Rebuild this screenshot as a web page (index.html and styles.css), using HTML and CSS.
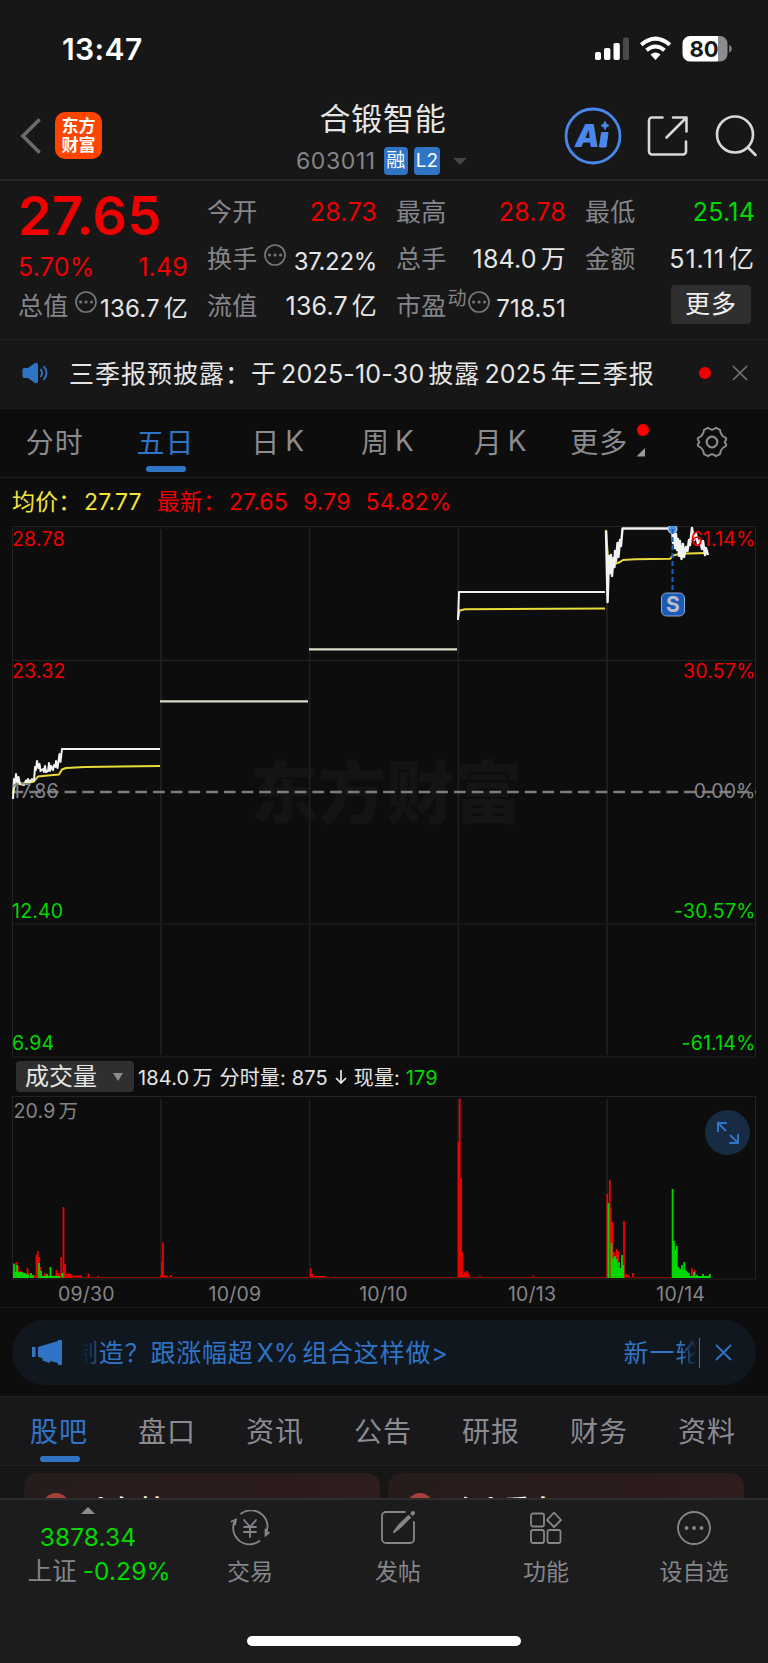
FILE: index.html
```html
<!DOCTYPE html>
<html lang="zh-CN">
<head>
    <meta charset="UTF-8">
    <meta name="viewport" content="width=device-width, initial-scale=1.0">
    <title>合锻智能 603011</title>
    <link rel="stylesheet" href="styles.css">
</head>
<body>
    <!-- Status Bar -->
    <div class="status-bar">
        <div class="clock">13:47</div>
        <svg class="status-icons" width="138" height="28" viewBox="594 35 138 28">
            <g fill="#fff">
                <rect x="595" y="52" width="6" height="8" rx="1.8"/>
                <rect x="604" y="48" width="6.4" height="12" rx="1.8"/>
                <rect x="613.5" y="43" width="6.3" height="17" rx="1.8"/>
                <rect x="623" y="37.5" width="6" height="22.5" rx="1.8" fill="#4a4a4a"/>
            </g>
            <g fill="none" stroke="#fff" stroke-width="4">
                <path d="M641.3 44.7Q655.5 32.5 669.8 44.7"/>
                <path d="M646.5 50.2Q655.5 42.8 664.5 50.2"/>
            </g>
            <path d="M650.5 54.5Q655.5 50.5 660.5 54.5L655.5 60Z" fill="#fff"/>
            <path d="M718 36H720a7.5 7.5 0 0 1 7.5 7.5V54a7.5 7.5 0 0 1-7.5 7.5H718Z" fill="#8c8c8c"/>
            <path d="M718 36H690a7.5 7.5 0 0 0-7.5 7.5V54a7.5 7.5 0 0 0 7.5 7.5H718Z" fill="#fff"/>
            <path d="M729 45Q732 46 732 48.7Q732 51.5 729 52.5Z" fill="#777"/>
            <text x="704" y="56.5" class="battery-text">80</text>
        </svg>
    </div>

    <!-- Nav -->
    <div class="nav">
        <div class="nav-left">
            <svg width="22" height="36" viewBox="0 0 22 36"><path d="M19.5 2.5L4 18L19.5 33.5" fill="none" stroke="#6a6a6a" stroke-width="3.8" stroke-linecap="round"/></svg>
            <div class="logo">东方<br>财富</div>
        </div>
        <div class="nav-title">
            <h1>合锻智能</h1>
            <div class="nav-code">
                <span>603011</span>
                <b class="tag">融</b>
                <b class="tag tag-l2">L2</b>
                <i class="caret"></i>
            </div>
        </div>
        <div class="nav-right">
            <svg width="58" height="58" viewBox="0 0 58 58">
                <circle cx="29" cy="29" r="27" fill="none" stroke="#4a87ec" stroke-width="2.8"/>
                <text x="11" y="39.5" class="ai-text">A</text>
                <path d="M37.5 25.5h6.5l-2 14.5h-6.5z" fill="#4a87ec" stroke="#4a87ec" stroke-linejoin="round"/>
                <path d="M41 14.5l1.3 2.7 2.7 1.3-2.7 1.3-1.3 2.7-1.3-2.7-2.7-1.3 2.7-1.3z" fill="#4a87ec" stroke="#4a87ec"/>
            </svg>
            <svg width="42" height="42" viewBox="0 0 42 42" fill="none" stroke="#d8d8d8" stroke-width="2.6" stroke-linecap="round" stroke-linejoin="round">
                <path d="M15.5 2.5H5a3 3 0 0 0-3 3V36.5a3 3 0 0 0 3 3H36a3 3 0 0 0 3-3V26.5M26 2.5H39.5V16.5M39 3L19.5 22.5"/>
            </svg>
            <svg width="42" height="42" viewBox="0 0 42 42" fill="none" stroke="#d8d8d8" stroke-width="2.6" stroke-linecap="round">
                <circle cx="20" cy="19.5" r="18"/><path d="M33 32.5L40.5 40"/>
            </svg>
        </div>
    </div>

    <!-- Quote -->
    <div class="quote">
        <div class="quote-col main-col">
            <div class="price red">27.65</div>
            <div class="cell change red"><span>5.70%</span><span>1.49</span></div>
            <div class="cell"><span class="label">总值</span><i class="more-dot"><svg viewBox="0 0 22 22"><circle cx="11" cy="11" r="10"/><path d="M5.5 11h.1M11 11h.1M16.5 11h.1"/></svg></i><span class="small">136.7<em>亿</em></span></div>
        </div>
        <div class="quote-col">
            <div class="cell"><span class="label">今开</span><span class="red">28.73</span></div>
            <div class="cell"><span class="label">换手</span><i class="more-dot"><svg viewBox="0 0 22 22"><circle cx="11" cy="11" r="10"/><path d="M5.5 11h.1M11 11h.1M16.5 11h.1"/></svg></i><span class="small turnover">37.22%</span></div>
            <div class="cell"><span class="label">流值</span><span>136.7<em>亿</em></span></div>
        </div>
        <div class="quote-col">
            <div class="cell"><span class="label">最高</span><span class="red">28.78</span></div>
            <div class="cell"><span class="label">总手</span><span>184.0<em>万</em></span></div>
            <div class="cell"><span class="label">市盈<sup>动</sup></span><i class="more-dot dot-tight"><svg viewBox="0 0 22 22"><circle cx="11" cy="11" r="10"/><path d="M5.5 11h.1M11 11h.1M16.5 11h.1"/></svg></i><span class="small">718.51</span></div>
        </div>
        <div class="quote-col">
            <div class="cell"><span class="label">最低</span><span class="green">25.14</span></div>
            <div class="cell"><span class="label">金额</span><span class="amount">51.11<em>亿</em></span></div>
            <button class="more-button">更多</button>
        </div>
    </div>

    <!-- Notice -->
    <div class="notice">
        <svg width="28" height="24" viewBox="0 0 28 24">
            <path d="M2 7H6L13 2Q16 1 16 4V20Q16 23 13 22L6 17H2Q.5 17 .5 15V9Q.5 7 2 7Z" fill="#2f74c5"/>
            <path d="M18.5 8Q21.5 12 18.5 16M21.5 5Q27.5 12 21.5 19" fill="none" stroke="#2f74c5" stroke-width="1.9"/>
        </svg>
        <div class="notice-text"><span>三季报预披露：于</span><span class="num">2025-10-30</span><span>披露</span><span class="num">2025</span><span>年三季报</span></div>
        <i class="red-dot"></i>
        <svg class="notice-close" width="16" height="16" viewBox="0 0 16 16"><path d="M1 1L15 15M15 1L1 15" stroke="#777" stroke-width="1.5"/></svg>
    </div>

    <!-- Period Tabs -->
    <div class="period-tabs">
        <div class="period">分时</div>
        <div class="period active">五日</div>
        <div class="period period-k">日<span>K</span></div>
        <div class="period period-k">周<span>K</span></div>
        <div class="period period-k">月<span>K</span></div>
        <div class="period period-more">更多
            <svg width="14" height="36" viewBox="0 0 14 36"><circle cx="7" cy="7" r="6" fill="#f00"/><path d="M9 25V33.5H.5Z" fill="#98989d"/></svg>
        </div>
        <div class="period period-set">
            <svg width="32" height="32" viewBox="0 0 32 32" fill="none" stroke="#8b8b90" stroke-width="1.9" stroke-linejoin="round">
                <path d="M12 1.8Q16 5.5 20 1.8L24 3.8Q24.5 9 29 11.5Q31 12 29.8 14.5Q27.5 16 29.8 17.5Q31 20 29 20.5Q24.5 23 24 28.2L20 30.2Q16 26.5 12 30.2L8 28.2Q7.5 23 3 20.5Q1 20 2.2 17.5Q4.5 16 2.2 14.5Q1 12 3 11.5Q7.5 9 8 3.8Z"/>
                <circle cx="16" cy="16" r="5.3" stroke-width="2.2"/>
            </svg>
        </div>
    </div>

    <!-- Price Chart -->
    <div class="legend">
        <span class="yellow name">均价：</span><span class="yellow">27.77</span>
        <span class="red name">最新：</span><span class="red">27.65</span><span class="red">9.79</span><span class="red">54.82%</span>
    </div>
    <svg class="price-chart" width="744" height="532" viewBox="12 526 744 532">
        <text x="250" y="818" class="watermark">东方财富</text>
        <g class="grid">
            <rect x="12.5" y="526.5" width="743" height="530.5"/>
            <path d="M12 660.5H756M12 924H756"/>
            <path class="grid-v" d="M161 529V1055M309.7 529V1055M458.3 529V1055M607 529V1055"/>
        </g>
        <path d="M12 792H756" stroke="#7d7d80" stroke-width="2.4" stroke-dasharray="11.7 6" stroke-dashoffset="0.5"/>
        <g class="line-avg">
            <path d="M13 794L15 784L28 783L34 781.5L38 776.5L48 775.5L59 774.5L62 769.5L66 768L85 767L120 766.5L160 766"/>
            <path d="M458 618L459.5 610.5L465 609.3L605 608.5"/>
            <path d="M606 530L608 558L610 564.5L616 563.5L620 562L623 560L635 559.3L670 558.8L673 555.5L680 553.8L706 553"/>
        </g>
        <g class="line-price">
            <path d="M13 799L14 779L14.8 786L16 774L17.5 783L18.5 777L20 784L24 785L26 780.5L27 784L28 779L30 782L32 779L34 781L35 767L36 770L37 761L38.5 768L39.5 764L40.5 771L43 769L44 772L45 766L46 772L48 771L49 763L50 771L51 766L53 770L54 765L55.5 767L56 761L57.5 768L59.5 754L60.5 762L62 749H160"/>
            <path d="M458 620L459 592H605"/>
            <path class="active-day" d="M606 531L607.6 602L609 556L610 573L611 555L612 576L613.5 558L614.5 567L615 551L616 561L617.5 543L618.5 557L620 540L621 546L622.5 528.5H672L673 543L674 533L675 548L676 534L677 550L678 539L679 556L680 541L681.5 559L683 544L684 557L686 547L687.5 551L689 540L690 545L692 528L694 540L696 534L698 544L700 540L702 549L703 541L705 555L706 548L708 555"/>
            <path class="flat" d="M160 701.3H308M309 649.3H457"/>
        </g>
        <circle cx="672.5" cy="529" r="4.5" fill="#4c8fe8" stroke="#cfe2ff"/>
        <path d="M672.5 529V593" stroke="#1d5fbd" stroke-width="2" stroke-dasharray="5 3"/>
        <rect x="661.5" y="593" width="23" height="23" rx="5" fill="#1b5cb8" stroke="#8fa8cc"/>
        <text x="673" y="612" class="mark-text">S</text>
        <g class="axis">
            <text x="12" y="545.5" class="up">28.78</text>
            <text x="12" y="678" class="up">23.32</text>
            <text x="12" y="798">17.86</text>
            <text x="12" y="917.5" class="down">12.40</text>
            <text x="12" y="1050" class="down">6.94</text>
        </g>
        <g class="axis axis-right">
            <text x="755.5" y="545.5" class="up">61.14%</text>
            <text x="755.5" y="678" class="up">30.57%</text>
            <text x="755.5" y="798">0.00%</text>
            <text x="755.5" y="917.5" class="down">-30.57%</text>
            <text x="755.5" y="1050" class="down">-61.14%</text>
        </g>
    </svg>

    <!-- Volume Chart -->
    <div class="volume-head">
        <div class="select">成交量<i></i></div>
        <span>184.0<em>万</em></span><span>分时量: 875</span>
        <svg width="12" height="16" viewBox="0 0 12 16"><path d="M6 1V14M1 9L6 14L11 9" fill="none" stroke="#e6e6e6" stroke-width="1.7"/></svg>
        <span>现量: <b class="green">179</b></span>
    </div>
    <div class="volume-box">
        <svg width="744" height="184" viewBox="12 1096 744 184">
            <g class="grid">
                <rect x="12.5" y="1096.5" width="743" height="182.5"/>
                <path class="grid-v" d="M161 1099V1278M309.7 1099V1278M458.3 1099V1278M607 1099V1278"/>
            </g>
            <path class="bar-up" d="M16.5 1278V1262M18 1278V1266M20 1278V1271M27.5 1278V1268M29 1278V1273M36.5 1278V1255M37.8 1278V1251M39 1278V1257M40.5 1278V1267M45 1278V1273M56.5 1278V1270M58 1278V1273M61.2 1278V1257M63.5 1278V1207M65 1278V1264M66.5 1278V1274M68.5 1278V1273M70.5 1278V1274M88.5 1278V1273.5M98 1278V1276M162 1278V1262M163 1278V1242.5M165 1278V1276M170.8 1278V1275M310.8 1278V1268.5M312.3 1278V1274M458.5 1278V1142M459.7 1278V1098.5M461 1278V1178M462 1278V1252M463.5 1278V1274M465 1278V1272M467 1278V1271M468 1278V1273M480 1278V1276M533.5 1278V1275.5M607.3 1278V1194M609.8 1278V1180M610.8 1278V1208M612.5 1278V1222M614 1278V1252M616.5 1278V1249M618 1278V1251M624 1278V1221M626 1278V1274M633 1278V1273M691.8 1278V1268M695 1278V1270"/>
            <path class="bar-up" d="M20 1276.5H82M160 1276.5H168M310 1277H325M458 1276.5H470M620 1276.5H630" stroke-width="2"/>
            <path d="M80 1277.5H606M625 1277.5H671" stroke="#940303" stroke-width="1"/>
            <path class="bar-down" d="M14 1278V1263.5M17 1278V1265M19 1278V1272M21 1278V1274M23 1278V1273M25 1278V1274M31 1278V1273M33 1278V1275M39 1278V1263M41 1278V1271M47 1278V1274M50.5 1278V1267M62.5 1278V1273M608.5 1278V1203M611.5 1278V1243M613.5 1278V1258M615 1278V1256M616.8 1278V1259M619 1278V1262M620.5 1278V1268M622 1278V1255M623.3 1278V1265M672.6 1278V1189M674 1278V1241M675.5 1278V1250M676.8 1278V1246M678.5 1278V1267M680 1278V1269M682 1278V1265M684.3 1278V1262M686 1278V1271M689 1278V1273M694 1278V1272M697 1278V1275M703 1278V1274M709.8 1278V1274"/>
            <path fill="#00d800" d="M13 1278V1272H22L29 1275V1278ZM42 1278V1276H60V1278ZM611 1278V1262L615 1264L620 1270H624V1278ZM673 1278V1266L680 1269L687 1271L690 1276H710V1278Z"/>
            <g class="axis"><text x="13.5" y="1118">20.9<tspan dx="3">万</tspan></text></g>
        </svg>
        <div class="expand">
            <svg width="24" height="24" viewBox="0 0 24 24" fill="none" stroke="#2f74c5" stroke-width="2"><path d="M2 11V2H11M2 2L10 10M22 13V22H13M22 22L14 14"/></svg>
        </div>
    </div>
    <div class="dates"><span>09/30</span><span>10/09</span><span>10/10</span><span>10/13</span><span>10/14</span></div>

    <!-- Promo -->
    <div class="promo-wrap">
        <div class="promo">
            <svg width="31" height="27" viewBox="0 0 31 27"><path d="M0 8H3.5V18H0ZM6 8L26 2V1H30V26H26V24L18.5 22L17.5 24L10.5 21.5V19L6 18Z" fill="#2f74c5"/></svg>
            <div class="promo-text">
                <span class="fade-left">制</span><span>造？跟涨幅超</span><span class="latin">X%</span><span>组合这样做&gt;</span>
            </div>
            <div class="promo-next">新一<span class="fade-right">轮</span></div>
            <i class="promo-line"></i>
            <svg width="17" height="17" viewBox="0 0 17 17"><path d="M1 1L16 16M16 1L1 16" stroke="#2f74c5" stroke-width="1.8"/></svg>
        </div>
    </div>

    <!-- Section Tabs -->
    <div class="section-tabs">
        <div class="section active">股吧</div>
        <div class="section">盘口</div>
        <div class="section">资讯</div>
        <div class="section">公告</div>
        <div class="section">研报</div>
        <div class="section">财务</div>
        <div class="section">资料</div>
    </div>
    <div class="cards">
        <div class="card"><i></i><span>人气榜</span></div>
        <div class="card"><i></i><span>个人看盘</span></div>
    </div>

    <!-- Bottom Bar -->
    <div class="bottom-bar">
        <div class="index-box">
            <i class="up-caret"></i>
            <div class="index-value green">3878.34</div>
            <div class="index-line">上证<span class="green">-0.29%</span></div>
        </div>
        <div class="tool">
            <svg width="40" height="36" viewBox="0 0 40 36"><path d="M11 3.8A16.4 16.4 0 0 1 35.8 24M29.5 31A16.4 16.4 0 0 1 4.5 11.5M1.5 11.5L6 9.5L5 14.5M35.5 19.500V25.500L39 22.500"/><path d="M14 10L20 17L26 10M20 17V27M14 17H26M14 22H26"/></svg>
            <span>交易</span>
        </div>
        <div class="tool">
            <svg width="36" height="36" viewBox="0 0 36 36"><path d="M25 2H6a4 4 0 0 0-4 4V29a4 4 0 0 0 4 4H30a4 4 0 0 0 4-4V12"/><path d="M32.5 3.5L33 3" stroke-width="4"/><path d="M13.5 22.5L19 15L28.5 6L30 7.5L20.5 17Z" fill="#85858b"/></svg>
            <span>发帖</span>
        </div>
        <div class="tool">
            <svg width="36" height="36" viewBox="0 0 36 36"><rect x="3" y="3.5" width="13" height="13" rx="2"/><rect x="3" y="20" width="13" height="13" rx="2"/><rect x="19.5" y="20" width="13" height="13" rx="2"/><path d="M26 2.7L33 10L26 17L19 10Z" stroke-linejoin="round"/></svg>
            <span>功能</span>
        </div>
        <div class="tool">
            <svg width="36" height="36" viewBox="0 0 36 36"><circle cx="18" cy="18" r="16"/><path d="M10.5 18h.1M18 18h.1M25.5 18h.1" stroke-width="3.8"/></svg>
            <span>设自选</span>
        </div>
        <div class="home-indicator"></div>
    </div>
</body>
</html>
```

FILE: styles.css
```css
/* Base Styles */
* {
    box-sizing: border-box;
}

body {
    margin: 0;
    width: 768px;
    height: 1663px;
    overflow: hidden;
    background: #0d0d0d;
    color: #e6e6e6;
    font-family: Inter, "Noto Sans CJK SC", sans-serif;
    font-weight: 400;
}

svg {
    display: block;
    flex: none;
}

i, em {
    font-style: normal;
}

.red { color: #f00000; }
.green { color: #00d800; }
.yellow { color: #f3e53b; }

/* Status Bar */
.status-bar {
    height: 90px;
    padding: 12px 36px 0 62px;
    background: #171717;
    display: flex;
    justify-content: space-between;
    align-items: flex-start;
}

.clock {
    margin-top: 15px;
    font-size: 30px;
    line-height: 44px;
    font-weight: 600;
    color: #fff;
    letter-spacing: 0.4px;
}

.status-icons {
    margin-top: 23px;
}

.battery-text {
    font-size: 22px;
    font-weight: 700;
    fill: #171717;
    text-anchor: middle;
}

/* Nav */
.nav {
    height: 91px;
    padding: 0 12px 0 19px;
    background: #171717;
    border-bottom: 2px solid #252525;
    display: grid;
    grid-template-columns: 200px 1fr 192px;
}

.nav-left {
    display: flex;
    align-items: center;
    gap: 14px;
    height: 91px;
}

.logo {
    width: 47px;
    height: 47px;
    padding-top: 5px;
    border-radius: 10px;
    background: #ff4400;
    color: #fff;
    font-size: 17px;
    line-height: 19px;
    font-weight: 700;
    text-align: center;
}

.nav-title {
    text-align: center;
}

.nav-title h1 {
    margin: 9px 0 0 -17px;
    font-size: 31px;
    line-height: 40px;
    font-weight: 400;
    letter-spacing: 0.8px;
}

.nav-code {
    display: flex;
    align-items: center;
    height: 30px;
    margin: 7px 0 0 77px;
    color: #85858b;
    font-size: 23px;
    letter-spacing: 0.6px;
}

.tag {
    width: 24px;
    height: 28px;
    margin-left: 8px;
    border-radius: 4px;
    background: #2f74c5;
    color: #fff;
    font-size: 19px;
    line-height: 28px;
    font-weight: 400;
    letter-spacing: 0;
}

.tag-l2 {
    width: 26px;
    margin-left: 6px;
}

.caret {
    margin-left: 13px;
    border: 7px solid transparent;
    border-top-color: #444;
    border-bottom: 0;
}

.nav-right {
    display: flex;
    align-items: center;
    gap: 25px;
    height: 91px;
}

.nav-right svg:last-child {
    margin-left: 1px;
}

.ai-text {
    font-size: 31px;
    font-weight: 900;
    font-style: italic;
    fill: #4a87ec;
}

/* Quote */
.quote {
    height: 159px;
    padding: 8px 13px 0 18px;
    background: #171717;
    border-bottom: 1px solid #212121;
    display: grid;
    grid-template-columns: repeat(4, 170px);
    column-gap: 19px;
}

.cell {
    height: 47px;
    display: flex;
    justify-content: space-between;
    align-items: center;
    font-size: 25px;
    line-height: 47px;
    white-space: nowrap;
    letter-spacing: 0.2px;
}

.cell em {
    margin-left: 4px;
    font-size: 25px;
}

.amount {
    letter-spacing: 1px;
}

.label {
    color: #85858b;
    letter-spacing: 0.3px;
}

.label sup {
    display: inline-block;
    font-size: 19px;
    line-height: 20px;
    vertical-align: 10px;
    margin-left: 1px;
}

.small {
    margin-top: 3px;
    margin-left: auto;
    font-size: 24px;
}

.small em {
    font-size: 24px;
}

.turnover {
    letter-spacing: -0.3px;
}

.more-dot {
    width: 22px;
    height: 22px;
    margin: 0 0 10px 6px;
}

.dot-tight {
    margin-left: 1px;
}

.more-dot svg {
    fill: none;
    stroke: #77777a;
    stroke-width: 1.7;
    stroke-linecap: round;
}

.more-dot path {
    stroke-width: 3;
}

.price {
    height: 57px;
    font-size: 54px;
    line-height: 54px;
    font-weight: 600;
    letter-spacing: 0.3px;
}

.main-col .change {
    height: 37px;
    padding-top: 5px;
    line-height: 37px;
}

.more-button {
    display: block;
    width: 80px;
    height: 39px;
    margin: 2px 4px 0 auto;
    padding: 0;
    border: none;
    border-radius: 4px;
    background: #2f2f2f;
    color: #f0f0f0;
    font: inherit;
    font-size: 25px;
    line-height: 37px;
    letter-spacing: 1px;
}

/* Notice */
.notice {
    height: 69px;
    padding: 0 20px 2px 22px;
    background: #171717;
    border-bottom: 1px solid #1c1c1c;
    display: flex;
    align-items: center;
}

.notice-text {
    flex: 1;
    display: flex;
    align-items: baseline;
    gap: 4px;
    margin-left: 19px;
    padding-bottom: 2px;
    font-size: 25px;
    white-space: nowrap;
    letter-spacing: 1px;
}

.notice-text .num {
    letter-spacing: 0.2px;
}

.red-dot {
    width: 12px;
    height: 12px;
    border-radius: 50%;
    background: #f00000;
}

.notice-close {
    margin-left: 21px;
}

/* Period Tabs */
.period-tabs {
    height: 69px;
    border-bottom: 1px solid #1e1e1e;
    display: flex;
}

.period {
    flex: 0 0 109.7px;
    display: flex;
    justify-content: center;
    align-items: center;
    padding-bottom: 4px;
    color: #8b8b90;
    font-size: 28px;
    letter-spacing: 1px;
}

.period span {
    margin-left: 5px;
}

.period-k {
    padding-left: 8px;
}

.period-k + .period-k + .period-k {
    padding-left: 14px;
}

.period-more {
    padding-left: 14px;
}

.period-more svg {
    margin: 0 0 0 8px;
}

.period-set {
    padding: 0 2px 2px 0;
}

.active {
    position: relative;
    color: #2f74c5;
}

.period.active {
    padding-left: 2px;
}

.active::after {
    content: "";
    position: absolute;
    bottom: 5px;
    left: calc(50% - 19px);
    width: 40px;
    height: 6px;
    border-radius: 3px;
    background: #2f74c5;
}

/* Price Chart */
.legend {
    height: 48px;
    padding: 0 12px;
    display: flex;
    align-items: baseline;
    gap: 15px;
    font-size: 23px;
    line-height: 48px;
    white-space: nowrap;
    letter-spacing: 0.15px;
}

.legend .name {
    width: 57px;
}

.price-chart {
    margin-left: 12px;
}

.grid {
    fill: none;
    stroke: #232323;
}

.grid-v {
    stroke: #1d1d1d;
    stroke-width: 2;
}

.line-price, .line-avg {
    fill: none;
    stroke: #f2f2f2;
    stroke-width: 2;
    stroke-linejoin: round;
}

.line-avg {
    stroke: #e8dc3a;
}

.line-price .flat {
    stroke: #dcdcc8;
    stroke-width: 2.2;
}

.line-price .active-day {
    stroke-width: 2.4;
}

.watermark {
    font-size: 68px;
    font-weight: 900;
    fill: #141414;
}

.mark-text {
    font-size: 21px;
    font-weight: 700;
    fill: #b9bfca;
    text-anchor: middle;
}

.axis {
    font-size: 19.5px;
    fill: #85858b;
    letter-spacing: 0.2px;
}

.axis-right {
    text-anchor: end;
}

.axis .up { fill: #f00000; }
.axis .down { fill: #00d800; }

/* Volume Chart */
.volume-head {
    height: 38px;
    padding: 0 16px 1px;
    display: flex;
    align-items: center;
    gap: 7px;
    font-size: 20px;
    white-space: nowrap;
    letter-spacing: 0.15px;
}

.volume-head em {
    margin-left: 3px;
}

.volume-head b {
    font-weight: 400;
}

.select {
    width: 118px;
    height: 31px;
    margin-right: -3px;
    padding: 0 11px 0 9px;
    border-radius: 4px;
    background: #2f2f2f;
    display: flex;
    align-items: center;
    justify-content: space-between;
    font-size: 24px;
    line-height: 31px;
    letter-spacing: 0;
}

.select i {
    border: 5px solid transparent;
    border-top: 8px solid #8b8b90;
    border-bottom: 0;
}

.volume-box {
    position: relative;
    height: 184px;
    padding-left: 12px;
}

.bar-up, .bar-down {
    fill: none;
    stroke: #f00000;
    stroke-width: 1.8;
}

.bar-down {
    stroke: #00d800;
}

.expand {
    position: absolute;
    top: 14px;
    right: 18px;
    width: 45px;
    height: 45px;
    border-radius: 50%;
    background: #172b42;
    display: flex;
    align-items: center;
    justify-content: center;
}

.dates {
    height: 28px;
    padding: 0 13px 0 12px;
    border-bottom: 1px solid #1c1c1c;
    display: flex;
    color: #85858b;
    font-size: 19.5px;
    line-height: 28px;
    letter-spacing: 0.2px;
}

.dates span {
    flex: 1;
    text-align: center;
}

/* Promo */
.promo-wrap {
    padding: 12px;
    height: 88px;
}

.promo {
    height: 65px;
    padding: 0 24px 0 20px;
    border-radius: 33px;
    background: #10171f;
    display: flex;
    align-items: center;
    color: #2f74c5;
    font-size: 25px;
    letter-spacing: 0.8px;
    white-space: nowrap;
}

.promo-text, .promo-next {
    padding-bottom: 3px;
}

.promo-text {
    flex: 1;
    display: flex;
    align-items: baseline;
    margin-left: 10px;
}

.fade-left {
    -webkit-mask-image: linear-gradient(to right, transparent 30%, #000 140%);
    mask-image: linear-gradient(to right, transparent 30%, #000 140%);
}

.fade-right {
    -webkit-mask-image: linear-gradient(to right, #000 20%, transparent 85%);
    mask-image: linear-gradient(to right, #000 20%, transparent 85%);
}

.latin {
    margin: 0 4px 0 3px;
    letter-spacing: 0;
}

.promo-line {
    width: 1px;
    height: 30px;
    margin: 0 15px 0 -2px;
    background: #2f74c5;
}

/* Section Tabs */
.section-tabs {
    height: 70px;
    padding: 0 7px 0 5px;
    background: #18181a;
    border-top: 1px solid #202020;
    border-bottom: 1px solid #202020;
    display: flex;
}

.section {
    flex: 1;
    color: #8b8b90;
    font-size: 28px;
    line-height: 70px;
    text-align: center;
    letter-spacing: 1px;
}

.section.active {
    color: #2f74c5;
}

.section.active::after {
    bottom: 3px;
}

.cards {
    height: 32px;
    padding: 7px 24px 0;
    background: #161616;
    display: flex;
    gap: 8px;
    overflow: hidden;
}

.card {
    width: 356px;
    height: 80px;
    padding: 16px 19px;
    border-radius: 14px;
    background: linear-gradient(100deg, #261c1c, #2b1c1b 70%, #2e1e1d);
    display: flex;
    gap: 19px;
    color: #fff;
    font-size: 26px;
    font-weight: 700;
    line-height: 42px;
}

.card i {
    width: 26px;
    height: 26px;
    margin-top: 4px;
    border-radius: 50%;
    background: #a7403a;
}

/* Bottom Bar */
.bottom-bar {
    position: relative;
    height: 165px;
    background: #1c1c1c;
    border-top: 2px solid #2d2d2d;
    display: grid;
    grid-template-columns: 176px repeat(4, 148px);
}

.index-box {
    display: flex;
    flex-direction: column;
    align-items: center;
    font-size: 24.5px;
    letter-spacing: 0.1px;
}

.up-caret {
    margin-top: 7px;
    border: 7px solid transparent;
    border-top: 0;
    border-bottom-color: #8b8b90;
}

.index-value {
    margin-top: 5px;
    line-height: 36px;
}

.index-line {
    padding-left: 22px;
    line-height: 33px;
    color: #85858b;
    white-space: nowrap;
}

.index-line span {
    margin-left: 6px;
}

.tool {
    display: flex;
    flex-direction: column;
    align-items: center;
    padding-top: 10px;
    color: #85858b;
    font-size: 23px;
}

.tool svg {
    fill: none;
    stroke: #85858b;
    stroke-width: 1.8;
    stroke-linecap: round;
}

.tool span {
    margin-top: 8px;
    line-height: 36px;
}

.home-indicator {
    position: absolute;
    left: 247px;
    bottom: 17px;
    width: 274px;
    height: 10px;
    border-radius: 5px;
    background: #fff;
}
```
